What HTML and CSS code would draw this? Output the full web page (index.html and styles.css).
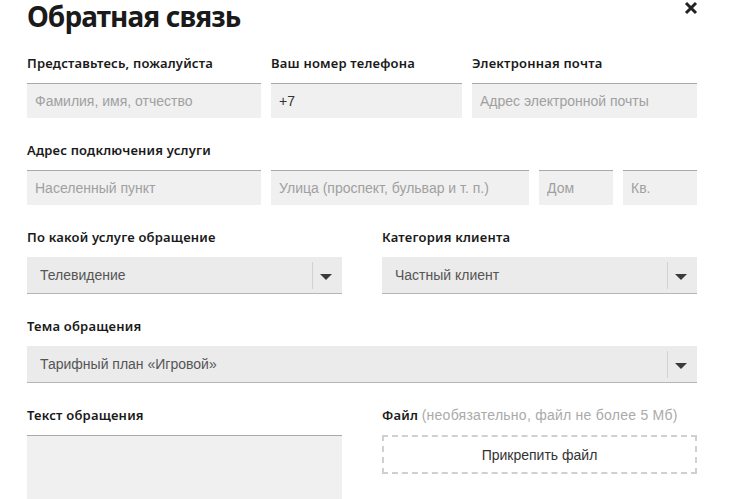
FILE: index.html
```html
<!doctype html>
<html lang="ru">
  <head>
    <meta charset="UTF-8" />
    <meta name="viewport" content="width=device-width, initial-scale=1" />
    <link rel="stylesheet" href="styles.css">
  </head>
  <body>
    <div class="modal">
      <button class="modal__close" aria-label="Закрыть">
        <svg width="14" height="14" viewBox="0 0 14 14">
          <path d="M2 2 L12 12 M12 2 L2 12" stroke="#222" stroke-width="3" />
        </svg>
      </button>
      <h1 class="modal__title">Обратная связь</h1>

      <div class="row row--contacts">
        <div class="field">
          <label class="field__label">Представьтесь, пожалуйста</label>
          <input class="input" placeholder="Фамилия, имя, отчество" />
        </div>
        <div class="field">
          <label class="field__label">Ваш номер телефона</label>
          <input class="input" value="+7" />
        </div>
        <div class="field">
          <label class="field__label">Электронная почта</label>
          <input class="input" placeholder="Адрес электронной почты" />
        </div>
      </div>

      <div class="field">
        <label class="field__label">Адрес подключения услуги</label>
        <div class="row row--address">
          <input class="input" placeholder="Населенный пункт" />
          <input class="input" placeholder="Улица (проспект, бульвар и т. п.)" />
          <input class="input" placeholder="Дом" />
          <input class="input" placeholder="Кв." />
        </div>
      </div>

      <div class="row row--half">
        <div class="field">
          <label class="field__label">По какой услуге обращение</label>
          <div class="select">
            <span class="select__value">Телевидение</span>
            <span class="select__arrow"></span>
          </div>
        </div>
        <div class="field">
          <label class="field__label">Категория клиента</label>
          <div class="select">
            <span class="select__value">Частный клиент</span>
            <span class="select__arrow"></span>
          </div>
        </div>
      </div>

      <div class="field">
        <label class="field__label">Тема обращения</label>
        <div class="select">
          <span class="select__value">Тарифный план «Игровой»</span>
          <span class="select__arrow"></span>
        </div>
      </div>

      <div class="row row--half row--last">
        <div class="field">
          <label class="field__label">Текст обращения</label>
          <textarea class="textarea"></textarea>
        </div>
        <div class="field">
          <label class="field__label">Файл <span class="field__hint">(необязательно, файл не более 5 Мб)</span></label>
          <button class="attach">Прикрепить файл</button>
        </div>
      </div>
    </div>
  </body>
</html>
```

FILE: styles.css
```css
body {
  margin: 0;
  background: #fff;
  color: #1a1a1a;
  font-family: "Liberation Sans", Arial, sans-serif;
  overflow: hidden;
}

.modal {
  position: relative;
  width: 670px;
  padding-left: 27px;
}

.modal__title {
  margin: 0 0 21px;
  font-family: "Noto Sans", sans-serif;
  font-size: 28px;
  font-weight: 700;
  line-height: 32px;
  letter-spacing: -0.9px;
}

.modal__close {
  position: absolute;
  top: 1px;
  left: 684px;
  padding: 0;
  border: 0;
  background: none;
}

.modal__close svg {
  display: block;
}

.row {
  display: grid;
  gap: 10px;
}

.row--contacts {
  grid-template-columns: 234px 191px 1fr;
}

.row--address {
  grid-template-columns: 234px 258px 74px 74px;
}

.row--half {
  grid-template-columns: 1fr 1fr;
  gap: 40px;
}

.field {
  display: flex;
  flex-direction: column;
  margin-bottom: 22px;
}

.row--last .field {
  margin-bottom: 0;
}

.field__label {
  font-family: "Noto Sans", sans-serif;
  font-size: 13px;
  font-weight: 600;
  line-height: 20px;
  letter-spacing: 0.2px;
  margin-bottom: 10px;
  white-space: nowrap;
}

.field__hint {
  font-family: "Liberation Sans", Arial, sans-serif;
  font-size: 14px;
  font-weight: 400;
  letter-spacing: 0.25px;
  color: #aaa;
}

.input {
  box-sizing: border-box;
  height: 35px;
  width: 100%;
  margin: 0;
  padding: 0 8px;
  border: 0;
  border-top: 1px solid #a9a9a9;
  background: #f0f0f0;
  font-family: "Liberation Sans", Arial, sans-serif;
  font-size: 14px;
  color: #333;
}

.input::placeholder {
  color: #a0a0a0;
}

.select {
  box-sizing: border-box;
  display: flex;
  align-items: center;
  height: 37px;
  background: #ebebeb;
  border-bottom: 1px solid #b5b5b5;
}

.select__value {
  flex: 1;
  padding-left: 13px;
  font-size: 14px;
  color: #555;
}

.select__arrow {
  position: relative;
  align-self: stretch;
  width: 29px;
  margin: 5px 0 4px;
  border-left: 1px solid #d2d2d2;
}

.select__arrow::after {
  content: "";
  position: absolute;
  top: 12px;
  left: 7px;
  border-left: 6px solid transparent;
  border-right: 6px solid transparent;
  border-top: 6px solid #3a3a3a;
}

.textarea {
  box-sizing: border-box;
  height: 64px;
  margin: 0;
  border: 0;
  border-top: 1px solid #a9a9a9;
  background: #f0f0f0;
  resize: none;
}

.attach {
  box-sizing: border-box;
  height: 39px;
  border: 2px dashed #d0d0d0;
  background: #fff;
  font-family: "Liberation Sans", Arial, sans-serif;
  font-size: 14px;
  color: #333;
}
```
